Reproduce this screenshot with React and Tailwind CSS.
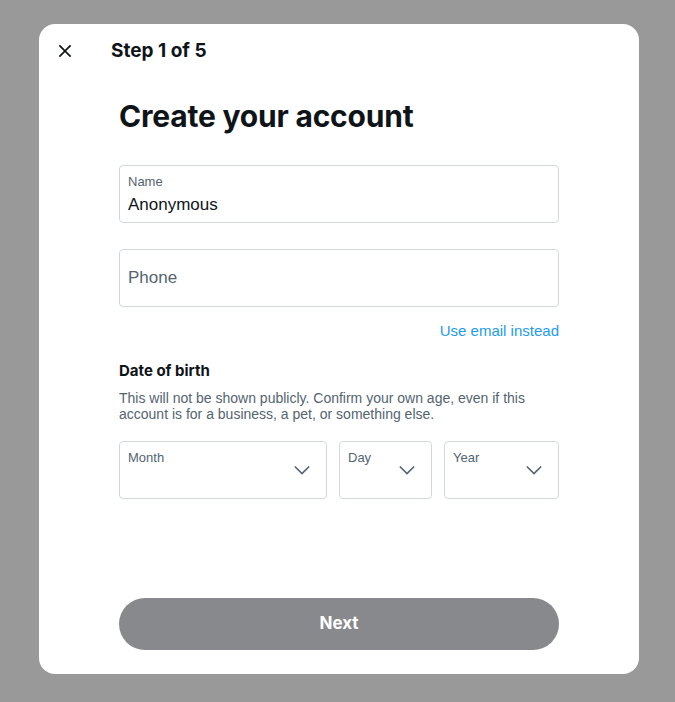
import React from "react";

function Chevron() {
  return (
    <svg width="22" height="22" viewBox="0 0 24 24">
      <polyline points="4.2,8.2 12,16 19.8,8.2" fill="none" stroke="#536471" strokeWidth="1.8" />
    </svg>
  );
}

function Select({ label, w }) {
  return (
    <div className={`relative h-[58px] rounded-[4px] border border-[#cfd9de] ${w}`}>
      <div className="pl-[8px] pt-[8px] text-[13px] leading-[16px] text-[#536471]">{label}</div>
      <div className="absolute right-[13px] top-[17px]">
        <Chevron />
      </div>
    </div>
  );
}

export default function App() {
  return (
    <div
      className="h-[702px] w-[675px] bg-[#999999] pl-[39px] pt-[24px]"
      style={{ fontFamily: "Inter, 'Liberation Sans', sans-serif" }}
    >
      <div className="flex h-[650px] w-[600px] flex-col rounded-[16px] bg-white">
        <div className="flex h-[53px] items-center pl-[16px]">
          <svg width="20" height="20" viewBox="0 0 24 24">
            <path
              d="M10.59 12L4.54 5.96l1.42-1.42L12 10.59l6.04-6.05 1.42 1.42L13.41 12l6.05 6.04-1.42 1.42L12 13.41l-6.04 6.05-1.42-1.42L10.59 12z"
              fill="#0f1419"
            />
          </svg>
          <div className="ml-[36px] text-[19px] font-bold leading-[24px] text-[#0f1419]">Step 1 of 5</div>
        </div>
        <div className="flex flex-1 flex-col px-[80px]">
          <h1 className="mt-[21px] text-[30px] font-bold leading-[36px] tracking-[-0.2px] text-[#0f1419]">
            Create your account
          </h1>
          <div className="mt-[31px] h-[58px] rounded-[4px] border border-[#cfd9de] px-[8px] pt-[8px]">
            <div className="text-[13px] leading-[16px] text-[#536471]" style={{ fontFamily: "'Liberation Sans', sans-serif" }}>Name</div>
            <div className="mt-[3px] text-[17px] leading-[24px] text-[#0f1419]" style={{ fontFamily: "'Liberation Sans', sans-serif" }}>Anonymous</div>
          </div>
          <div className="mt-[26px] flex h-[58px] items-center rounded-[4px] border border-[#cfd9de] px-[8px]">
            <div className="text-[17px] leading-[24px] text-[#536471]" style={{ fontFamily: "'Liberation Sans', sans-serif" }}>Phone</div>
          </div>
          <div className="mt-[14px] text-right text-[15px] leading-[20px] text-[#1d9bf0]" style={{ fontFamily: "'Liberation Sans', sans-serif" }}>
            Use email instead
          </div>
          <div className="mt-[20px] text-[15px] font-bold leading-[20px] text-[#0f1419]">Date of birth</div>
          <div className="mt-[9px] text-[14px] leading-[16px] text-[#536471]" style={{ fontFamily: "'Liberation Sans', sans-serif" }}>
            This will not be shown publicly. Confirm your own age, even if this account is for a business, a pet, or
            something else.
          </div>
          <div className="mt-[19px] flex gap-[12px]" style={{ fontFamily: "'Liberation Sans', sans-serif" }}>
            <Select label="Month" w="w-[208px]" />
            <Select label="Day" w="w-[93px]" />
            <Select label="Year" w="flex-1" />
          </div>
          <div className="mt-auto mb-[24px] flex h-[52px] items-center justify-center rounded-full bg-[#87898c] text-[17px] font-bold text-white">
            Next
          </div>
        </div>
      </div>
    </div>
  );
}
